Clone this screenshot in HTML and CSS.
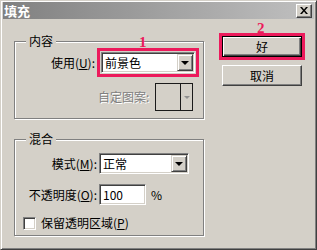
FILE: index.html
```html
<!DOCTYPE html>
<html lang="zh-CN">
<head>
  <meta charset="UTF-8">
  <title>填充</title>
  <link rel="stylesheet" href="styles.css">
</head>
<body>
  <div class="window">
    <div class="titlebar">
      <span class="title">填充</span>
      <button class="close-btn" aria-label="关闭">
        <svg width="8" height="7" viewBox="0 0 8 7"><path d="M0 0h2l2 2.5L6 0h2L5 3.5 8 7H6L4 4.5 2 7H0l3-3.5z" fill="#000"/></svg>
      </button>
    </div>

    <div class="dialog-body">
      <div class="left-col">
        <!-- 内容 -->
        <div class="group group-content">
          <div class="group-title">内容</div>
          <div class="row row-use">
            <label class="field-label label-use">使用(<u>U</u>):</label>
            <div class="highlight">
              <span class="mark mark-1">1</span>
              <div class="select select-use">
                <span class="select-value">前景色</span>
                <span class="select-arrow"></span>
              </div>
            </div>
          </div>
          <div class="row row-pattern">
            <span class="label-disabled">自定图案:</span>
            <div class="pattern-picker">
              <span class="pattern-swatch"></span>
              <span class="pattern-arrow"></span>
            </div>
          </div>
        </div>

        <!-- 混合 -->
        <div class="group group-blend">
          <div class="group-title">混合</div>
          <div class="row row-mode">
            <label class="field-label">模式(<u>M</u>):</label>
            <div class="select select-mode">
              <span class="select-value">正常</span>
              <span class="select-arrow"></span>
            </div>
          </div>
          <div class="row row-opacity">
            <label class="field-label">不透明度(<u>O</u>):</label>
            <div class="text-input">100</div>
            <span class="unit">%</span>
          </div>
          <div class="row row-check">
            <span class="checkbox"></span>
            <label class="check-label">保留透明区域(<u>P</u>)</label>
          </div>
        </div>
      </div>

      <div class="right-col">
        <div class="highlight highlight-ok">
          <span class="mark mark-2">2</span>
          <button class="btn btn-default">好</button>
        </div>
        <button class="btn btn-cancel">取消</button>
      </div>
    </div>
  </div>
</body>
</html>
```

FILE: styles.css
```css
body {
  margin: 0;
  font-family: "Noto Sans CJK SC", "Liberation Sans", sans-serif;
  font-size: 12px;
  color: #000;
}

.window {
  width: 317px;
  height: 250px;
  box-sizing: border-box;
  background-color: #d4d0c8;
  border: 1px solid;
  border-color: #d4d0c8 #404040 #404040 #d4d0c8;
  box-shadow: inset 1px 1px 0 #fff, inset -1px -1px 0 #808080;
  padding: 1px 2px 2px 2px;
}

.titlebar {
  height: 17px;
  display: flex;
  align-items: center;
  justify-content: space-between;
  padding: 0 2px 0 1px;
  background: linear-gradient(to right, #808080, #c0c0c0);
}

.title {
  color: #fff;
  font-weight: bold;
  font-size: 13px;
  line-height: 17px;
}

.close-btn {
  width: 16px;
  height: 14px;
  padding: 0;
  display: flex;
  align-items: center;
  justify-content: center;
  background-color: #d4d0c8;
  border: 1px solid;
  border-color: #fff #404040 #404040 #fff;
  box-shadow: inset -1px -1px 0 #808080;
}

.dialog-body {
  display: flex;
  gap: 15px;
  padding: 14px 0 0 11px;
}

.left-col {
  width: 190px;
  padding-top: 8px;
}

.group {
  border: 1px solid #808080;
  box-shadow: 1px 1px 0 #fff, inset 1px 1px 0 #fff;
}

.group-title {
  width: max-content;
  margin: -8px 0 0 11px;
  padding: 0 3px;
  line-height: 14px;
  background-color: #d4d0c8;
}

.group-content {
  padding-bottom: 7px;
}

.group-blend {
  margin-top: 20px;
  padding-bottom: 5px;
}

.row {
  display: flex;
  align-items: center;
}

.field-label {
  width: 84px;
  box-sizing: border-box;
  padding-right: 2px;
  text-align: right;
  line-height: 14px;
}

.label-use {
  width: 82px;
}

.highlight {
  position: relative;
  border: 3px solid #ec1a5c;
  padding: 1px;
}

.highlight-ok {
  padding: 0;
}

.mark {
  position: absolute;
  color: #ec1a5c;
  font-family: "Liberation Serif", serif;
  font-weight: bold;
  font-size: 15px;
  line-height: 15px;
}

.mark-1 {
  top: -16px;
  left: 39px;
}

.mark-2 {
  top: -15px;
  left: 35px;
}

.select {
  height: 21px;
  box-sizing: border-box;
  display: flex;
  align-items: center;
  justify-content: space-between;
  background-color: #fff;
  border: 1px solid;
  border-color: #808080 #fff #fff #808080;
  box-shadow: inset 1px 1px 0 #404040, inset -1px -1px 0 #d4d0c8;
  padding: 1px;
}

.select-use {
  width: 94px;
}

.select-mode {
  width: 90px;
}

.select-value {
  padding-left: 2px;
  line-height: 14px;
}

.select-arrow {
  width: 16px;
  height: 17px;
  box-sizing: border-box;
  display: flex;
  align-items: center;
  justify-content: center;
  background-color: #d4d0c8;
  border: 1px solid;
  border-color: #d4d0c8 #404040 #404040 #d4d0c8;
  box-shadow: inset 1px 1px 0 #fff, inset -1px -1px 0 #808080;
}

.select-arrow::after {
  content: "";
  border-top: 4px solid #000;
  border-left: 4px solid transparent;
  border-right: 4px solid transparent;
  margin-top: 1px;
}

.row-pattern {
  margin-top: 6px;
  padding-left: 83px;
}

.label-disabled {
  color: #808080;
  text-shadow: 1px 1px 0 #fff;
  margin-right: 6px;
  line-height: 14px;
}

.pattern-picker {
  width: 38px;
  height: 28px;
  box-sizing: border-box;
  display: flex;
  border: 1px solid #1a1a1a;
}

.pattern-swatch {
  flex: 1;
  border-right: 1px solid #1a1a1a;
}

.pattern-arrow {
  width: 11px;
  display: flex;
  align-items: center;
  justify-content: center;
}

.pattern-arrow::after {
  content: "";
  border-top: 3px solid #909090;
  border-left: 3px solid transparent;
  border-right: 3px solid transparent;
}

.row-mode {
  margin-top: 7px;
}

.row-opacity {
  margin-top: 10px;
}

.text-input {
  width: 47px;
  height: 21px;
  box-sizing: border-box;
  background-color: #fff;
  border: 1px solid;
  border-color: #808080 #fff #fff #808080;
  box-shadow: inset 1px 1px 0 #404040, inset -1px -1px 0 #d4d0c8;
  padding: 0 3px;
  line-height: 19px;
}

.unit {
  margin-left: 5px;
  line-height: 14px;
}

.row-check {
  margin-top: 11px;
  padding-left: 8px;
}

.checkbox {
  width: 13px;
  height: 13px;
  box-sizing: border-box;
  background-color: #fff;
  border: 1px solid;
  border-color: #808080 #fff #fff #808080;
  box-shadow: inset 1px 1px 0 #404040, inset -1px -1px 0 #d4d0c8;
}

.check-label {
  margin-left: 5px;
  line-height: 14px;
}

.right-col {
  width: 86px;
  display: flex;
  flex-direction: column;
}

.btn {
  width: 80px;
  height: 21px;
  padding: 0;
  font-family: inherit;
  font-size: 12px;
  color: #000;
  background-color: #d4d0c8;
  border: 1px solid;
  border-color: #fff #404040 #404040 #fff;
  box-shadow: inset -1px -1px 0 #808080;
}

.btn-default {
  display: block;
  border: 1px solid #000;
  box-shadow: inset 1px 1px 0 #fff, inset -1px -1px 0 #404040, inset -2px -2px 0 #808080;
}

.btn-cancel {
  margin: 5px 0 0 3px;
}
```
